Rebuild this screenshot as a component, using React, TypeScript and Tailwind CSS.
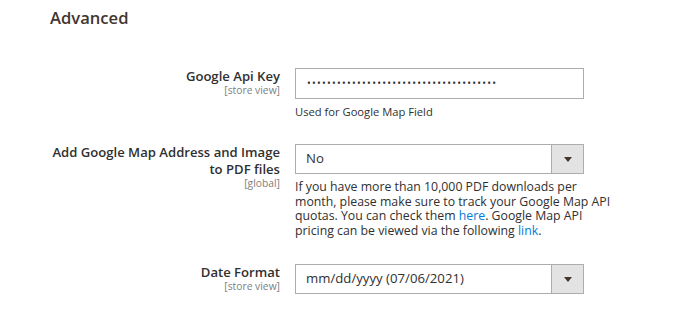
import React from "react";

const font = { fontFamily: '"Open Sans", "Noto Sans", Arial, sans-serif' };

function Caret() {
  return (
    <svg width="8" height="5" viewBox="0 0 8 5">
      <path d="M0 0 L8 0 L4 5 Z" fill="#41362f" />
    </svg>
  );
}

function Select({ value }: { value: string }) {
  return (
    <div className="flex h-[30px] w-[289px] border border-[#adadad] bg-white">
      <div className="flex flex-1 items-center pl-[10px] text-[13.2px] text-[#303030]">{value}</div>
      <div className="flex w-[32px] items-center justify-center border-l border-[#adadad] bg-[#e3e3e3]">
        <Caret />
      </div>
    </div>
  );
}

function Label({ title, scope }: { title: React.ReactNode; scope: string }) {
  return (
    <div className="w-[280px] text-right">
      <div className="text-[13.1px] font-semibold leading-[17px] text-[#303030]">{title}</div>
      <div className="-mt-[2px] text-[10.3px] leading-[14px] text-[#808080]">{scope}</div>
    </div>
  );
}

export default function App() {
  return (
    <div className="h-[311px] w-[685px] overflow-hidden bg-white" style={font}>
      <div className="pl-[50px] pt-[6px] text-[16.6px] font-semibold leading-[24px] text-[#41362f]">Advanced</div>

      <div className="mt-[38px] flex">
        <Label title="Google Api Key" scope="[store view]" />
        <div className="ml-[15px] w-[289px]">
          <div className="flex h-[31px] items-center border border-[#adadad] bg-white pl-[11px] text-[10px] tracking-[1.25px] text-[#303030]">
            {"•".repeat(38)}
          </div>
          <div className="mt-[5px] text-[11.2px] leading-[15px] text-[#303030]">Used for Google Map Field</div>
        </div>
      </div>

      <div className="mt-[25px] flex">
        <Label
          title={
            <>
              Add Google Map Address and Image
              <br />
              to PDF files
            </>
          }
          scope="[global]"
        />
        <div className="ml-[15px] w-[289px]">
          <Select value="No" />
          <div className="mt-[6px] whitespace-nowrap text-[12.3px] leading-[14.5px] text-[#303030]">
            If you have more than 10,000 PDF downloads per
            <br />
            month, please make sure to track your Google Map API
            <br />
            quotas. You can check them <span className="text-[#007bdb]">here</span>. Google Map API
            <br />
            pricing can be viewed via the following <span className="text-[#007bdb]">link</span>.
          </div>
        </div>
      </div>

      <div className="mt-[26px] flex">
        <Label title="Date Format" scope="[store view]" />
        <div className="ml-[15px] w-[289px]">
          <Select value="mm/dd/yyyy (07/06/2021)" />
        </div>
      </div>
    </div>
  );
}
